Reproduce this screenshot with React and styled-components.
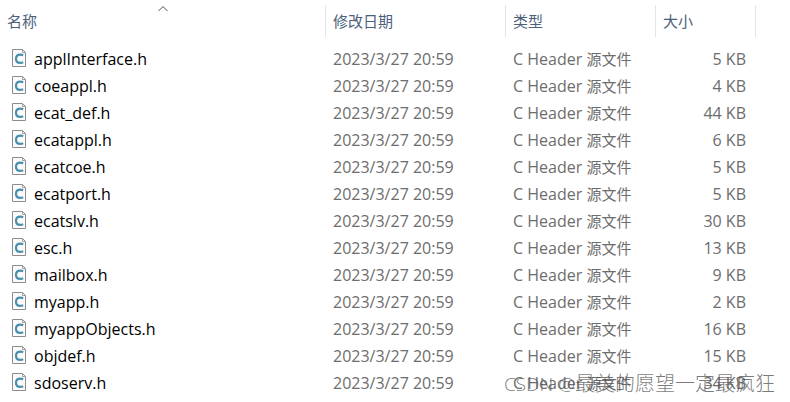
import React from "react";
import styled, { createGlobalStyle } from "styled-components";

const GlobalStyle = createGlobalStyle`
    body {
        margin: 0;
        background: #ffffff;
        font-family: "Open Sans", "Noto Sans CJK SC", sans-serif;
        font-size: 16px;
        color: #000000;
    }
`;

const Explorer = styled.main`
    position: relative;
    padding: 5px 0;
    overflow: hidden;
`;

const FileTable = styled.table`
    width: 100%;
    table-layout: fixed;
    border-collapse: separate;
    border-spacing: 0;
`;

const Column = styled.col`
    width: ${({ $width }) => $width};
`;

const HeaderCell = styled.th`
    position: relative;
    height: 32px;
    padding: 0;
    border-right: 1px solid #e5e5e5;
    font-weight: 400;
`;

const SortButton = styled.button`
    display: block;
    width: 100%;
    height: 32px;
    padding: 0 7px;
    border: none;
    background: none;
    color: #4c607a;
    font-family: "Noto Sans CJK SC", sans-serif;
    font-size: 15px;
    line-height: 32px;
    text-align: left;
`;

const SortArrow = styled.svg`
    position: absolute;
    top: 0;
    left: 50%;
    width: 11px;
    height: 7px;
    transform: translateX(-50%);
`;

const FileList = styled.tbody`
    &::before {
        content: "";
        display: block;
        height: 9px;
    }
`;

const Cell = styled.td`
    height: 27px;
    padding: 0 7px;
    color: #6d6d6d;
    line-height: 27px;
    white-space: nowrap;
`;

const SizeCell = styled(Cell)`
    padding-right: 10px;
    text-align: right;
`;

const FileName = styled.div`
    display: flex;
    align-items: center;
    gap: 7px;
    padding-left: 5px;
    color: #000000;
`;

const TypeSuffix = styled.span`
    font-size: 15px;
`;

const Icon = styled.svg`
    flex: none;
    width: 15px;
    height: 19px;
    margin-bottom: 2px;
`;

const Watermark = styled.div`
    position: absolute;
    right: 15px;
    bottom: 4px;
    color: rgba(80, 80, 80, 0.75);
    font-size: 20px;
    font-weight: 300;
    line-height: 28px;
    white-space: nowrap;
    pointer-events: none;
`;

const WatermarkSite = styled.span`
    font-size: 19px;
`;

const files = [
    { name: "applInterface.h", size: "5 KB" },
    { name: "coeappl.h", size: "4 KB" },
    { name: "ecat_def.h", size: "44 KB" },
    { name: "ecatappl.h", size: "6 KB" },
    { name: "ecatcoe.h", size: "5 KB" },
    { name: "ecatport.h", size: "5 KB" },
    { name: "ecatslv.h", size: "30 KB" },
    { name: "esc.h", size: "13 KB" },
    { name: "mailbox.h", size: "9 KB" },
    { name: "myapp.h", size: "2 KB" },
    { name: "myappObjects.h", size: "16 KB" },
    { name: "objdef.h", size: "15 KB" },
    { name: "sdoserv.h", size: "34 KB" },
];

const headers = ["名称", "修改日期", "类型", "大小"];

const HeaderFileIcon = () => (
    <Icon viewBox="0 0 15 19" aria-hidden="true">
        <path d="M0.5 0.5H10.5L13.5 3.5V17.5H0.5Z" fill="#fbfbfb" stroke="#8c8c8c" />
        <path d="M10.5 0.5V3.5H13.5" fill="none" stroke="#a0a0a0" />
        <path
            d="M11.2 6.2C10.3 5.8 9.4 5.6 8.4 5.6C5.6 5.6 4 7.2 4 9.8C4 12.4 5.6 13.9 8.2 13.9C9.4 13.9 10.3 13.7 11.2 13.3"
            fill="none"
            stroke="#4a8fae"
            strokeWidth="2.2"
        />
    </Icon>
);

const App = () => {
    return (
        <>
            <GlobalStyle />
            <Explorer>
                <FileTable>
                    <colgroup>
                        <Column $width="326px" />
                        <Column $width="180px" />
                        <Column $width="150px" />
                        <Column $width="100px" />
                        <Column $width="auto" />
                    </colgroup>
                    <thead>
                        <tr>
                            {headers.map((header, index) => (
                                <HeaderCell key={header} scope="col" aria-sort={index === 0 ? "ascending" : undefined}>
                                    <SortButton type="button">{header}</SortButton>
                                    {index === 0 && (
                                        <SortArrow viewBox="0 0 11 7" aria-hidden="true">
                                            <path d="M1 6L5.5 1.5L10 6" fill="none" stroke="#505050" />
                                        </SortArrow>
                                    )}
                                </HeaderCell>
                            ))}
                            <td />
                        </tr>
                    </thead>
                    <FileList>
                        {files.map((file) => (
                            <tr key={file.name}>
                                <Cell>
                                    <FileName>
                                        <HeaderFileIcon />
                                        {file.name}
                                    </FileName>
                                </Cell>
                                <Cell>2023/3/27 20:59</Cell>
                                <Cell>
                                    C Header <TypeSuffix>源文件</TypeSuffix>
                                </Cell>
                                <SizeCell>{file.size}</SizeCell>
                                <td />
                            </tr>
                        ))}
                    </FileList>
                </FileTable>
                <Watermark>
                    <WatermarkSite>CSDN @</WatermarkSite>最美的愿望一定最疯狂
                </Watermark>
            </Explorer>
        </>
    );
};

export default App;
